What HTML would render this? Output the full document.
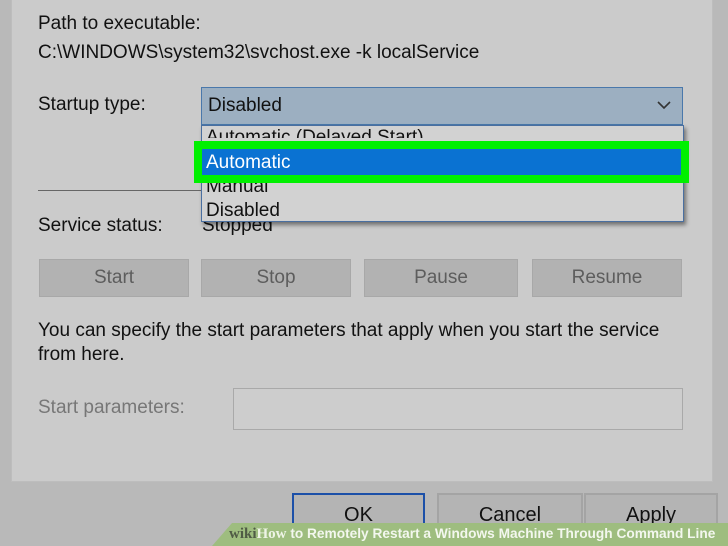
<!DOCTYPE html>
<html><head><style>
*{margin:0;padding:0;box-sizing:border-box}
html,body{width:728px;height:546px;overflow:hidden}
body{background:#b9b9b9;font-family:"Liberation Sans",Arial,sans-serif;position:relative;color:#111}
.a{position:absolute;white-space:nowrap}
.panel{position:absolute;left:11px;top:-2px;width:702px;height:484px;background:#cbcbcb;border:1px solid #bdbdbd}
.t{font-size:19px}
.btn{position:absolute;top:259px;height:38px;background:#b2b2b2;border:1px solid #a8a8a8;color:#5d5d5d;font-size:19px;text-align:center;line-height:36px}
.bb{position:absolute;top:493px;height:53px;background:#b4b4b4;border:2px solid #a4a4a4;border-bottom:none;font-size:20px;text-align:center;line-height:40px;color:#111}
</style></head><body>
<div class="panel"></div>
<div class="a t" style="left:38px;top:13px">Path to executable:</div>
<div class="a t" style="left:38px;top:42px">C:\WINDOWS\system32\svchost.exe -k localService</div>
<div class="a t" style="left:38px;top:94px">Startup type:</div>
<div class="a" style="left:201px;top:87px;width:482px;height:38px;background:#9cafc1;border:1px solid #4a78ab"></div>
<div class="a t" style="left:208px;top:95px">Disabled</div>
<svg class="a" style="left:657px;top:100px" width="14" height="10"><path d="M1 2 L7 8 L13 2" fill="none" stroke="#333" stroke-width="1.6"/></svg>
<div class="a" style="left:38px;top:190px;width:164px;height:1px;background:#666"></div>
<div class="a t" style="left:38px;top:215px">Service status:</div>
<div class="a t" style="left:202px;top:215px">Stopped</div>
<div class="a" style="left:201px;top:125px;width:483px;height:97px;background:#d2d2d2;border:1px solid #4a6fa0;box-shadow:2px 3px 4px rgba(0,0,0,.45)"></div>
<div class="a t" style="left:206px;top:127px;height:11px;overflow:hidden">Automatic (Delayed Start)</div>
<div class="a t" style="left:206px;top:176px">Manual</div>
<div class="a t" style="left:206px;top:200px">Disabled</div>
<div class="a" style="left:194px;top:141px;width:495px;height:42px;border:8px solid #00f000;background:#0a72d2"></div>
<div class="a t" style="left:206px;top:152px;color:#fff">Automatic</div>
<div class="btn" style="left:39px;width:150px">Start</div>
<div class="btn" style="left:201px;width:150px">Stop</div>
<div class="btn" style="left:364px;width:154px">Pause</div>
<div class="btn" style="left:532px;width:150px">Resume</div>
<div class="a t" style="left:38px;top:320px">You can specify the start parameters that apply when you start the service</div>
<div class="a t" style="left:38px;top:344px">from here.</div>
<div class="a t" style="left:38px;top:397px;color:#777">Start parameters:</div>
<div class="a" style="left:233px;top:388px;width:450px;height:42px;border:1px solid #a9a9a9;background:#cdcdcd"></div>
<div class="bb" style="left:292px;width:133px;border-color:#1c50a8">OK</div>
<div class="bb" style="left:437px;width:146px">Cancel</div>
<div class="bb" style="left:584px;width:134px">Apply</div>
<svg class="a" style="left:0;top:523px" width="728" height="23"><polygon points="232,0 728,0 728,23 212,23" fill="#9ebd7f"/></svg>
<div class="a" style="left:229px;top:526px;font-size:15px;font-family:'Liberation Serif',serif;font-weight:bold;color:#4f5b45">wiki<span style="color:#eef4e6">How</span><span style="font-family:'Liberation Sans',sans-serif;font-size:13.7px;color:#f3f7ee;font-weight:bold"> to Remotely Restart a Windows Machine Through Command Line</span></div>
</body></html>
